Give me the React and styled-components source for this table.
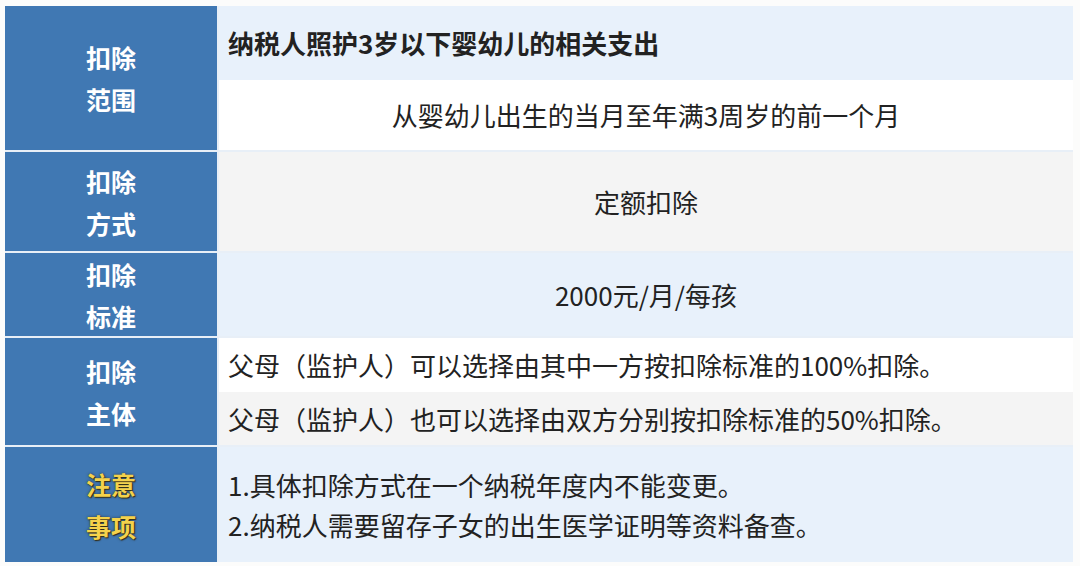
import React from "react";
import styled, { createGlobalStyle } from "styled-components";

const Global = createGlobalStyle`
  html, body { margin: 0; padding: 0; background: #fbfbfb; }
  body { font-family: "Noto Sans CJK SC", "Noto Sans", sans-serif; }
`;

const Frame = styled.div`
  width: 1080px;
  height: 566px;
  box-sizing: border-box;
  padding: 6px 7px 4px 5px;
  background: #fcfcfb;
`;

const Table = styled.div`
  display: grid;
  grid-template-columns: 212px 1fr;
  grid-template-rows: 144px 99px 83px 107px 115px;
  gap: 2px;
  background: #e8eff7;
`;

const Label = styled.div`
  background: #4078b3;
  display: flex;
  flex-direction: column;
  align-items: center;
  justify-content: center;
  font-size: 25px;
  font-weight: 700;
  line-height: 42px;
  color: ${(p) => (p.$warn ? "#f4d24c" : "#ffffff")};
  text-shadow: ${(p) =>
    p.$warn ? "1px 1px 1px rgba(50,35,0,0.85), 0 0 3px rgba(40,30,0,0.6)" : "none"};
  box-sizing: border-box;
`;

const Cell = styled.div`
  display: flex;
  flex-direction: column;
`;

const Line = styled.div`
  flex: ${(p) => p.$grow || 1};
  background: ${(p) => p.$bg};
  display: flex;
  flex-direction: column;
  justify-content: center;
  align-items: ${(p) => (p.$center ? "center" : "flex-start")};
  padding: 0 9px;
  font-size: 26px;
  font-weight: ${(p) => (p.$bold ? 700 : 400)};
  color: #222;
  line-height: 40px;
  white-space: nowrap;
`;

const BLUE = "#e8f1fb";
const GRAY = "#f4f4f4";
const WHITE = "#ffffff";

export default function App() {
  return (
    <>
      <Global />
      <Frame>
        <Table>
          <Label>
            <span>扣除</span>
            <span>范围</span>
          </Label>
          <Cell>
            <Line $bg={BLUE} $bold $grow={74}>
              纳税人照护3岁以下婴幼儿的相关支出
            </Line>
            <Line $bg={WHITE} $center $grow={70}>
              从婴幼儿出生的当月至年满3周岁的前一个月
            </Line>
          </Cell>

          <Label>
            <span>扣除</span>
            <span>方式</span>
          </Label>
          <Cell>
            <Line $bg={GRAY} $center>定额扣除</Line>
          </Cell>

          <Label>
            <span>扣除</span>
            <span>标准</span>
          </Label>
          <Cell>
            <Line $bg={BLUE} $center>2000元/月/每孩</Line>
          </Cell>

          <Label>
            <span>扣除</span>
            <span>主体</span>
          </Label>
          <Cell>
            <Line $bg={WHITE} $grow={54}>
              父母（监护人）可以选择由其中一方按扣除标准的100%扣除。
            </Line>
            <Line $bg={GRAY} $grow={53}>
              父母（监护人）也可以选择由双方分别按扣除标准的50%扣除。
            </Line>
          </Cell>

          <Label $warn>
            <span>注意</span>
            <span>事项</span>
          </Label>
          <Cell>
            <Line $bg={BLUE}>
              <span>1.具体扣除方式在一个纳税年度内不能变更。</span>
              <span>2.纳税人需要留存子女的出生医学证明等资料备查。</span>
            </Line>
          </Cell>
        </Table>
      </Frame>
    </>
  );
}
